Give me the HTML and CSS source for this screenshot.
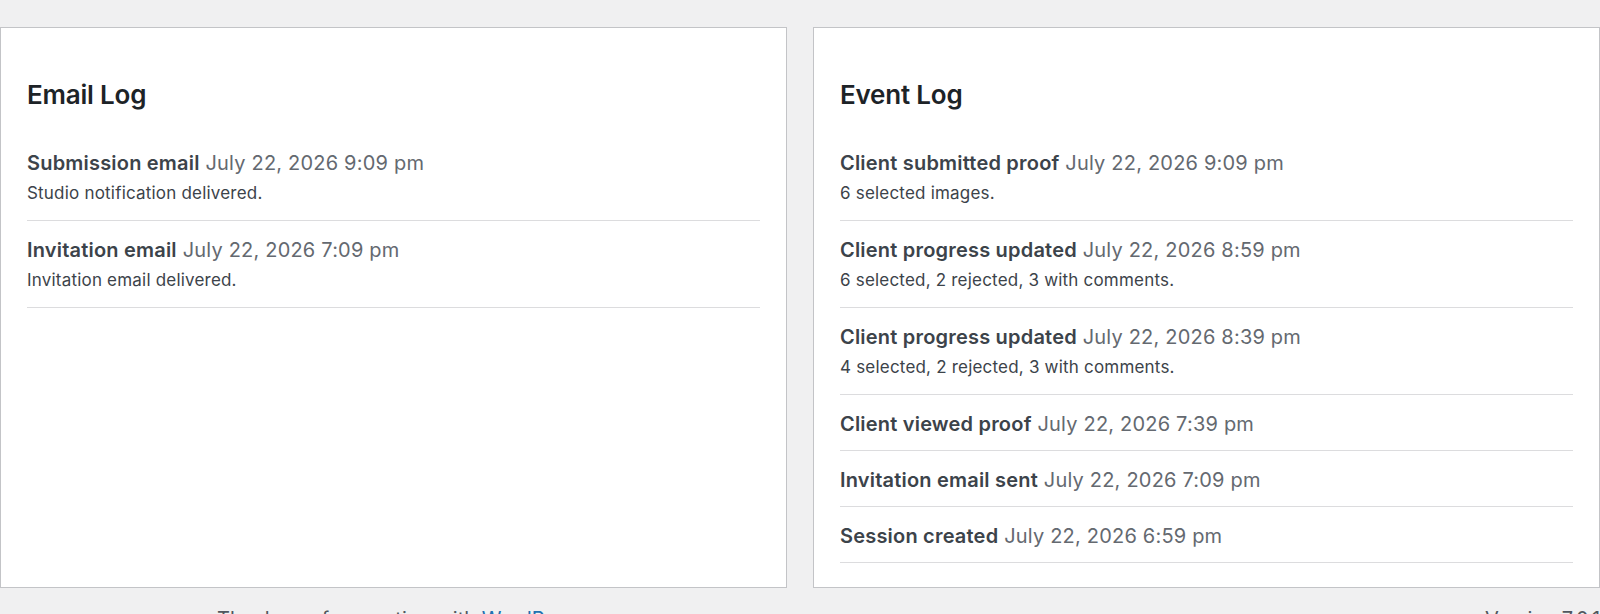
FILE: index.html
```html
<!DOCTYPE html>
<html lang="en">
<head>
<meta charset="utf-8">
<title>Proof Logs</title>
<link rel="stylesheet" href="styles.css">
</head>
<body>
<main class="logs">
  <section class="card">
    <h2 class="card-title">Email Log</h2>
    <ul class="log-list">
      <li class="log-item">
        <div class="log-head"><strong class="log-name">Submission email</strong> <span class="log-date">July 22, 2026 9:09 pm</span></div>
        <p class="log-desc">Studio notification delivered.</p>
      </li>
      <li class="log-item">
        <div class="log-head"><strong class="log-name">Invitation email</strong> <span class="log-date">July 22, 2026 7:09 pm</span></div>
        <p class="log-desc">Invitation email delivered.</p>
      </li>
    </ul>
  </section>
  <section class="card">
    <h2 class="card-title">Event Log</h2>
    <ul class="log-list">
      <li class="log-item">
        <div class="log-head"><strong class="log-name">Client submitted proof</strong> <span class="log-date">July 22, 2026 9:09 pm</span></div>
        <p class="log-desc">6 selected images.</p>
      </li>
      <li class="log-item">
        <div class="log-head"><strong class="log-name">Client progress updated</strong> <span class="log-date">July 22, 2026 8:59 pm</span></div>
        <p class="log-desc">6 selected, 2 rejected, 3 with comments.</p>
      </li>
      <li class="log-item">
        <div class="log-head"><strong class="log-name">Client progress updated</strong> <span class="log-date">July 22, 2026 8:39 pm</span></div>
        <p class="log-desc">4 selected, 2 rejected, 3 with comments.</p>
      </li>
      <li class="log-item">
        <div class="log-head"><strong class="log-name">Client viewed proof</strong> <span class="log-date">July 22, 2026 7:39 pm</span></div>
      </li>
      <li class="log-item">
        <div class="log-head"><strong class="log-name">Invitation email sent</strong> <span class="log-date">July 22, 2026 7:09 pm</span></div>
      </li>
      <li class="log-item">
        <div class="log-head"><strong class="log-name">Session created</strong> <span class="log-date">July 22, 2026 6:59 pm</span></div>
      </li>
    </ul>
  </section>
</main>
<footer class="footer">
  <span class="footer-thanks">Thank you for creating with <a href="#" class="footer-link">WordPress</a>.</span>
  <span class="footer-version">Version 7.0.1</span>
</footer>
</body>
</html>
```
FILE: styles.css
```css
html, body {
  margin: 0;
  padding: 0;
}
body {
  background: #f0f0f1;
  font-family: Inter, "Noto Sans", "Liberation Sans", sans-serif;
  color: #3c434a;
  width: 1600px;
  height: 614px;
  overflow: hidden;
}
.logs {
  display: grid;
  grid-template-columns: 1fr 1fr;
  gap: 26px;
  padding-top: 27px;
  align-items: stretch;
}
.card {
  background: #fff;
  border: 1px solid #c3c4c7;
  padding: 51px 26px 24px;
}
.card-title {
  margin: 0 0 24px;
  font-size: 26px;
  line-height: 31px;
  font-weight: 600;
  color: #1d2327;
  letter-spacing: -0.2px;
}
.log-list {
  list-style: none;
  margin: 0;
  padding: 0;
}
.log-item {
  padding: 15px 0 12px;
  border-bottom: 1px solid #dcdcde;
}
.log-head {
  font-size: 20px;
  line-height: 28px;
  letter-spacing: 0.2px;
  white-space: nowrap;
}
.log-name {
  font-weight: 600;
  color: #3c434a;
}
.log-date {
  color: #646970;
  font-weight: 400;
}
.log-desc {
  margin: 5px 0 4px;
  font-size: 17px;
  line-height: 22px;
  letter-spacing: 0.2px;
  color: #3c434a;
}
.footer {
  display: flex;
  margin-top: 17px;
  font-size: 20px;
  line-height: 28px;
  color: #50575e;
  white-space: nowrap;
}
.footer-thanks {
  padding-left: 217px;
}
.footer-link {
  color: #2271b1;
}
.footer-version {
  margin-left: auto;
  width: 115px;
}
```
